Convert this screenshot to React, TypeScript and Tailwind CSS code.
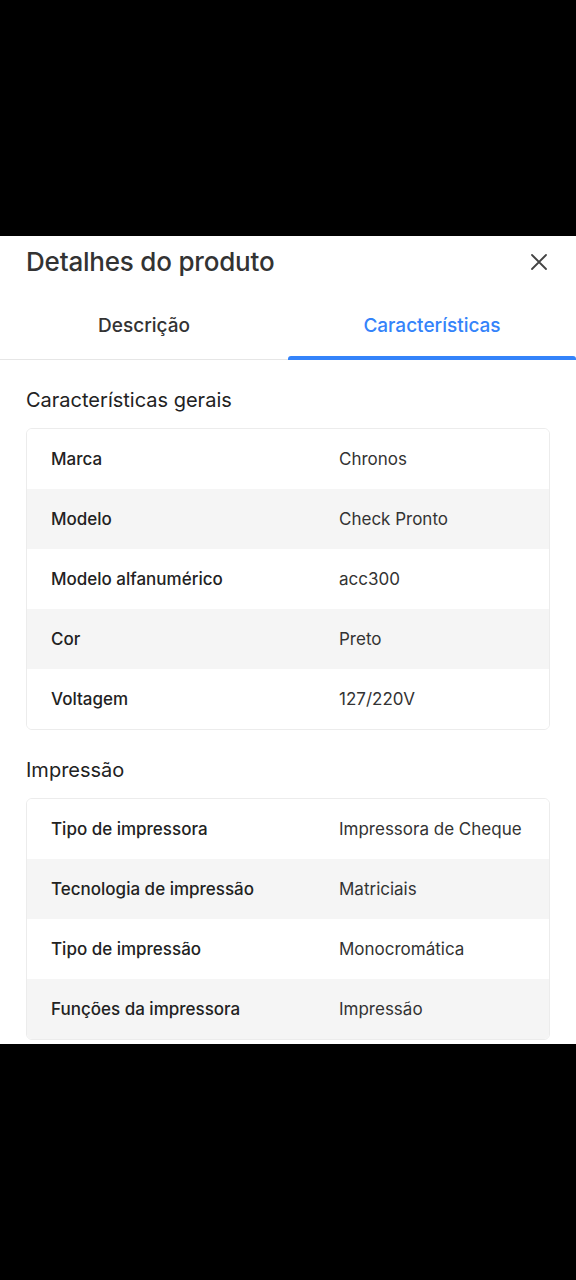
import React from "react";

const geral = [
  ["Marca", "Chronos"],
  ["Modelo", "Check Pronto"],
  ["Modelo alfanumérico", "acc300"],
  ["Cor", "Preto"],
  ["Voltagem", "127/220V"],
];
const impressao = [
  ["Tipo de impressora", "Impressora de Cheque"],
  ["Tecnologia de impressão", "Matriciais"],
  ["Tipo de impressão", "Monocromática"],
  ["Funções da impressora", "Impressão"],
];

function Table({ rows }: { rows: string[][] }) {
  return (
    <div className="mx-[26px] rounded-md border border-[#ececec] overflow-hidden">
      {rows.map(([k, v], i) => (
        <div
          key={k}
          className={`flex h-[60px] items-center pt-[2px] ${i % 2 === 1 ? "bg-[#f5f5f5]" : "bg-white"}`}
        >
          <div className="w-[312px] pl-[24px] text-[17px] font-medium text-[#222]">{k}</div>
          <div className="flex-1 text-[17px] text-[#333]">{v}</div>
        </div>
      ))}
    </div>
  );
}

export default function App() {
  return (
    <div className="w-[576px] h-[1280px] bg-black flex flex-col" style={{ fontFamily: "Inter, 'Noto Sans', sans-serif" }}>
      <div className="h-[236px]" />
      <div className="bg-white h-[808px] flex flex-col overflow-hidden">
        <div className="flex items-center justify-between h-[50px] pl-[26px] pr-[28px] pt-[1px]">
          <div className="text-[26px] font-medium text-[#333] tracking-[-0.2px]">Detalhes do produto</div>
          <svg width="18" height="18" viewBox="0 0 18 18" fill="none" stroke="#444" strokeWidth="1.8" strokeLinecap="round">
            <path d="M2 2L16 16M16 2L2 16" />
          </svg>
        </div>
        <div className="relative flex h-[74px] border-b border-[#e6e6e6]">
          <div className="flex-1 flex items-center justify-center text-[19px] font-medium text-[#333] pt-[8px]">Descrição</div>
          <div className="flex-1 flex items-center justify-center text-[19px] font-medium text-[#3483fa] pt-[8px]">Características</div>
          <div className="absolute right-0 bottom-[-1px] w-[288px] h-[4px] rounded-t-[3px] bg-[#3483fa]" />
        </div>
        <div className="pl-[26px] pt-[25px] pb-[13px] text-[20px] text-[#222] font-normal">Características gerais</div>
        <Table rows={geral} />
        <div className="pl-[26px] pt-[25px] pb-[13px] text-[20px] text-[#222] font-normal">Impressão</div>
        <Table rows={impressao} />
      </div>
    </div>
  );
}
